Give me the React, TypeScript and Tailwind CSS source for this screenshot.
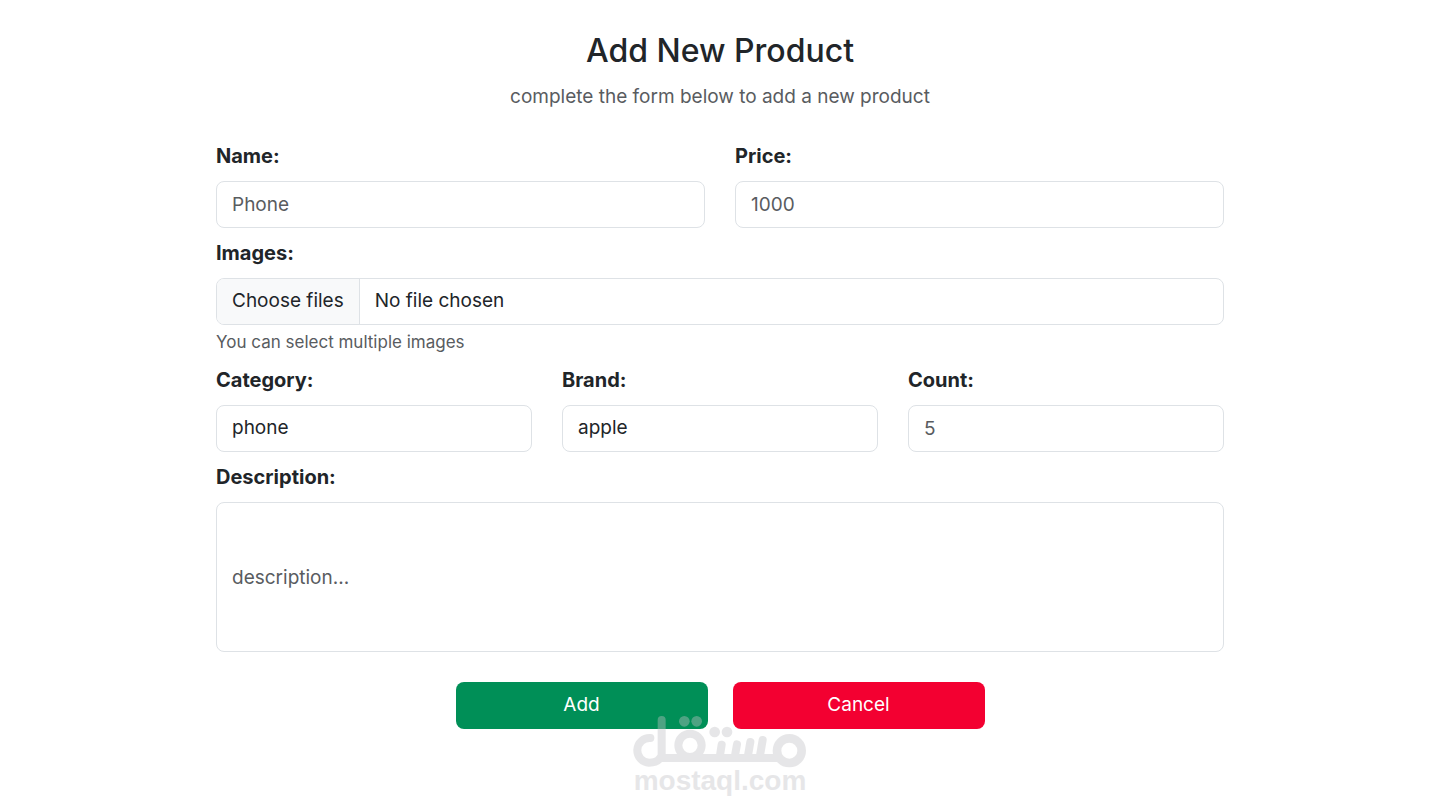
import React from "react";
import { clsx } from "clsx";

interface FieldProps {
  id: string;
  label: string;
  children: React.ReactNode;
}

const control =
  "block w-full rounded-lg border border-[#dee2e6] bg-white px-[15px] text-[19px] text-[#212529] placeholder:text-[#595c5f]";

const Field: React.FC<FieldProps> = ({ id, label, children }) => (
  <div className="flex flex-col gap-2.5">
    <label htmlFor={id} className="text-xl leading-[30px] font-bold">
      {label}
    </label>
    {children}
  </div>
);

const Watermark: React.FC = () => (
  <div className="pointer-events-none absolute top-[34px] left-1/2 flex w-44 -translate-x-1/2 flex-col items-center text-[#c3c3c6] opacity-40">
    {/* Logo mark */}
    <svg
      viewBox="67 138 528 156"
      className="h-[52px] w-44"
      fill="none"
      stroke="currentColor"
      strokeWidth="24"
      strokeLinecap="round"
      strokeLinejoin="round"
      aria-hidden="true"
    >
      <path d="M122 204 A37 37 0 1 0 118 278 Q143 278 151 264 H502" />
      <path d="M156 150 V258" />
      <circle cx="241" cy="226" r="35" />
      <path d="M336 224 L330 262 M382 223 L375 262 M422 216 L414 262 M459 210 L450 262" />
      <circle cx="539" cy="242" r="37" strokeWidth="26" />
      <g fill="currentColor" stroke="none">
        <circle cx="224" cy="154" r="16" />
        <circle cx="261" cy="154" r="16" />
        <circle cx="315" cy="186" r="16" />
        <circle cx="352" cy="186" r="16" />
      </g>
    </svg>
    <span className="font-['Liberation_Sans',Arial,sans-serif] text-[28px] leading-[26px] font-bold">
      mostaql.com
    </span>
  </div>
);

const App: React.FC = () => {
  return (
    <main className="min-h-screen bg-white pt-[29px] pb-20 font-[Inter,sans-serif] text-[#212529]">
      <div className="mx-auto w-[70%]">
        <header className="text-center">
          <h1 className="text-[32px] leading-11 font-medium">
            Add New Product
          </h1>
          <p className="mt-2 text-[19px] leading-8 text-[#595c5f]">
            complete the form below to add a new product
          </p>
        </header>

        <form
          className="mt-7 flex flex-col gap-2.5"
          onSubmit={(e) => e.preventDefault()}
        >
          <div className="grid grid-cols-2 gap-[30px]">
            <Field id="name" label="Name:">
              <input
                id="name"
                type="text"
                placeholder="Phone"
                className={clsx(control, "h-[47px]")}
              />
            </Field>
            <Field id="price" label="Price:">
              <input
                id="price"
                type="text"
                inputMode="numeric"
                placeholder="1000"
                className={clsx(control, "h-[47px]")}
              />
            </Field>
          </div>

          <div>
            <Field id="images" label="Images:">
              <label
                htmlFor="images"
                className="relative flex h-[47px] cursor-pointer items-stretch overflow-hidden rounded-lg border border-[#dee2e6] text-[19px]"
              >
                <input id="images" type="file" multiple className="sr-only" />
                <span className="flex items-center border-r border-[#dee2e6] bg-[#f8f9fa] px-[15px]">
                  Choose files
                </span>
                <span className="flex items-center px-[15px]">
                  No file chosen
                </span>
              </label>
            </Field>
            <p className="mt-1 text-[17px] leading-[26px] text-[#595c5f]">
              You can select multiple images
            </p>
          </div>

          <div className="grid grid-cols-3 gap-[30px]">
            <Field id="category" label="Category:">
              <select
                id="category"
                defaultValue="phone"
                className={clsx(control, "h-[47px] appearance-none")}
              >
                <option value="phone">phone</option>
              </select>
            </Field>
            <Field id="brand" label="Brand:">
              <select
                id="brand"
                defaultValue="apple"
                className={clsx(control, "h-[47px] appearance-none")}
              >
                <option value="apple">apple</option>
              </select>
            </Field>
            <Field id="count" label="Count:">
              <input
                id="count"
                type="text"
                inputMode="numeric"
                placeholder="5"
                className={clsx(control, "h-[47px]")}
              />
            </Field>
          </div>

          <Field id="description" label="Description:">
            <input
              id="description"
              type="text"
              placeholder="description..."
              className={clsx(control, "h-[150px]")}
            />
          </Field>

          <div className="relative mt-5 flex justify-center gap-[25px] text-[19px] text-white">
            <button
              type="submit"
              className="h-[47px] w-1/4 rounded-lg bg-[#008f57]"
            >
              Add
            </button>
            <button
              type="button"
              className="h-[47px] w-1/4 rounded-lg bg-[#f30031]"
            >
              Cancel
            </button>
            <Watermark />
          </div>
        </form>
      </div>
    </main>
  );
};

export default App;
